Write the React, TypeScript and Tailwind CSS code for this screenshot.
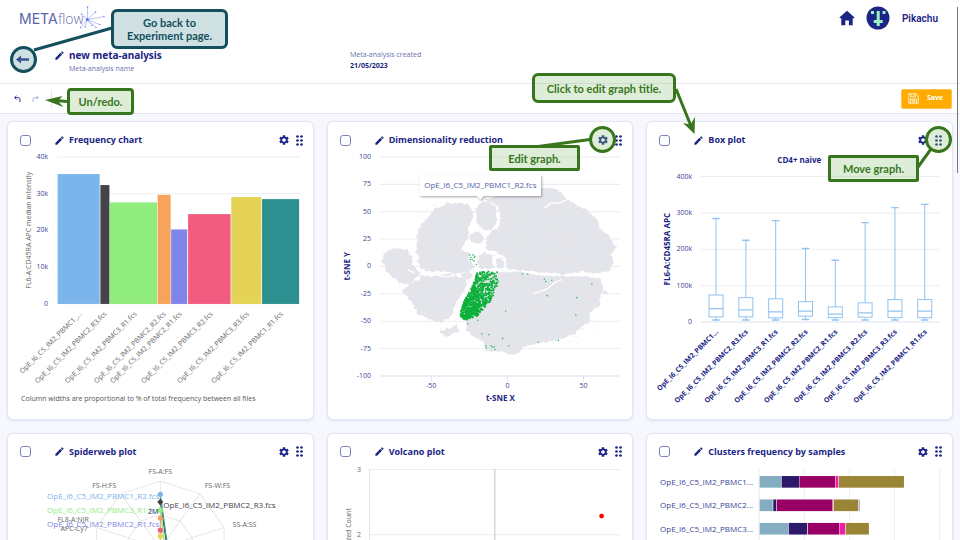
import type { ReactNode } from "react";
import { MdEdit, MdSettings } from "react-icons/md";

const NAVY = "#1b2585";
const GRID = "#ededf0";

const FILES = [
  "OpE_I6_C5_IM2_PBMC1_…",
  "OpE_I6_C5_IM2_PBMC2_R3.fcs",
  "OpE_I6_C5_IM2_PBMC3_R1.fcs",
  "OpE_I6_C5_IM2_PBMC2_R2.fcs",
  "OpE_I6_C5_IM2_PBMC2_R1.fcs",
  "OpE_I6_C5_IM2_PBMC3_R2.fcs",
  "OpE_I6_C5_IM2_PBMC3_R3.fcs",
  "OpE_I6_C5_IM2_PBMC1_R1.fcs",
];

type Point = [number, number];

// small seeded generator, keeps the scatter stable between renders
function createRandom(seed: number) {
  let s = seed;
  return () => {
    s = (s * 16807) % 2147483647;
    return s / 2147483647;
  };
}

function roughPath(points: Point[], seed: number, amount = 4) {
  const rand = createRandom(seed);
  const out: string[] = [];
  points.forEach((p, i) => {
    const q = points[(i + 1) % points.length];
    const steps = Math.max(1, Math.round(Math.hypot(q[0] - p[0], q[1] - p[1]) / 5));
    for (let k = 0; k < steps; k++) {
      const t = k / steps;
      const x = p[0] + (q[0] - p[0]) * t + (rand() - 0.5) * amount;
      const y = p[1] + (q[1] - p[1]) * t + (rand() - 0.5) * amount;
      out.push(`${x.toFixed(1)} ${y.toFixed(1)}`);
    }
  });
  return `M${out.join("L")}Z`;
}

function isInside([x, y]: Point, poly: Point[]) {
  let inside = false;
  for (let i = 0, j = poly.length - 1; i < poly.length; j = i++) {
    const [xi, yi] = poly[i];
    const [xj, yj] = poly[j];
    if (yi > y !== yj > y && x < ((xj - xi) * (y - yi)) / (yj - yi) + xi) inside = !inside;
  }
  return inside;
}

const CLUSTERS: Point[][] = [
  [[186, 425], [190, 404], [208, 388], [235, 384], [260, 390], [274, 408], [276, 428], [284, 444], [298, 456], [297, 468], [284, 476], [275, 488], [254, 493], [234, 486], [222, 474], [208, 466], [198, 448]],
  [[290, 350], [294, 324], [325, 288], [345, 264], [380, 250], [412, 247], [444, 252], [458, 278], [456, 300], [442, 322], [446, 350], [430, 368], [424, 392], [446, 396], [446, 420], [466, 436], [456, 450], [432, 458], [396, 460], [372, 452], [330, 455], [302, 446], [294, 428], [296, 408], [284, 396], [292, 376]],
  [[467, 266], [478, 246], [506, 245], [526, 262], [530, 285], [526, 314], [508, 330], [490, 328], [470, 312], [466, 290]],
  [[448, 352], [458, 336], [478, 334], [491, 348], [488, 366], [470, 372], [454, 366]],
  [[476, 408], [490, 394], [500, 402], [518, 404], [516, 428], [522, 444], [500, 446], [478, 444], [472, 426]],
  [[528, 420], [540, 412], [550, 420], [550, 446], [530, 446]],
  [[494, 238], [540, 226], [570, 212], [640, 205], [690, 203], [722, 216], [744, 240], [776, 258], [800, 270], [828, 292], [836, 322], [862, 344], [888, 382], [872, 402], [880, 428], [862, 454], [820, 460], [782, 454], [736, 463], [650, 454], [600, 450], [562, 446], [556, 414], [530, 396], [498, 386], [498, 352], [514, 334], [536, 318], [542, 286], [532, 256]],
  [[248, 510], [268, 492], [296, 480], [302, 464], [342, 468], [372, 460], [404, 464], [440, 482], [434, 506], [420, 530], [402, 554], [398, 584], [362, 605], [326, 598], [290, 578], [278, 546], [258, 526]],
  [[426, 458], [446, 454], [456, 464], [444, 480], [424, 474]],
  [[470, 454], [532, 455], [600, 455], [650, 464], [740, 468], [792, 468], [838, 474], [850, 502], [838, 536], [836, 554], [806, 578], [806, 604], [780, 620], [758, 644], [706, 660], [640, 670], [608, 682], [592, 698], [570, 704], [540, 692], [498, 692], [490, 664], [450, 642], [437, 626], [440, 602], [422, 590], [432, 540], [450, 506]],
  [[360, 634], [378, 624], [396, 622], [408, 610], [416, 634], [396, 640], [380, 650]],
  [[848, 516], [854, 508], [861, 517], [854, 523]],
];

const GREEN_REGION: Point[] = [[470, 453], [522, 453], [536, 456], [532, 490], [522, 512], [514, 538], [494, 560], [472, 586], [436, 600], [418, 588], [430, 546], [450, 508], [464, 480]];

const STRAY_CELLS: Point[] = [
  [448, 404], [458, 404], [452, 412], [462, 412], [456, 418], [464, 408], [450, 418], [461, 422], [468, 433], [606, 461], [622, 462], [672, 476], [676, 484], [694, 480], [814, 492], [680, 526], [769, 532], [766, 584], [556, 572], [443, 610], [484, 640], [506, 643], [547, 654], [653, 666], [714, 660], [498, 682], [496, 676], [512, 676], [516, 680], [522, 680], [524, 688], [565, 676], [472, 600], [532, 497], [534, 482],
];

function buildGreenCells() {
  const rand = createRandom(71);
  const cells: Point[] = [];
  while (cells.length < 800) {
    const p: Point = [416 + rand() * 122, 450 + rand() * 152];
    const edge = (p[0] - 440) / 100 - (p[1] - 520) / 300;
    if (isInside(p, GREEN_REGION) && rand() > edge * 0.8) cells.push(p);
  }
  return cells;
}

function buildSpecks() {
  const rand = createRandom(19);
  return Array.from({ length: 150 }, (): Point => [300 + rand() * 540, 250 + rand() * 420]);
}

const GREEN_CELLS = buildGreenCells();
const SPECKS = buildSpecks();

function Label({ x, y, children, size = 7, fill = "#3c4496", anchor = "middle", bold = false, rotate = 0 }: {
  x: number;
  y: number;
  children: ReactNode;
  size?: number;
  fill?: string;
  anchor?: "start" | "middle" | "end";
  bold?: boolean;
  rotate?: number;
}) {
  return (
    <text
      x={x}
      y={y}
      fontSize={size}
      fill={fill}
      textAnchor={anchor}
      fontWeight={bold ? 700 : 400}
      transform={rotate ? `rotate(${rotate} ${x} ${y})` : undefined}
    >
      {children}
    </text>
  );
}

function Plot({ title, children }: { title: string; children: ReactNode }) {
  return (
    <svg viewBox="0 0 304 268" className="block h-auto w-full" role="img" aria-label={title}>
      {children}
    </svg>
  );
}

function FrequencyChart() {
  const bars = [
    { x: 49.5, w: 42, top: 24, fill: "#7cb5ec" },
    { x: 92.2, w: 9, top: 35, fill: "#434348" },
    { x: 101.7, w: 47, top: 52.3, fill: "#90ed7d" },
    { x: 149.3, w: 13, top: 44.7, fill: "#f7a35c" },
    { x: 162.8, w: 16, top: 79.3, fill: "#8085e9" },
    { x: 179.7, w: 42.4, top: 64, fill: "#f15c80" },
    { x: 222.8, w: 30, top: 47, fill: "#e4d354" },
    { x: 253.5, w: 37, top: 49, fill: "#2b908f" },
  ];
  const ends = [74, 99, 129, 158, 174, 205, 241, 275];
  return (
    <Plot title="Frequency chart">
      {["40k", "30k", "20k", "10k", "0"].map((t, i) => (
        <g key={t}>
          <path d={`M49.5 ${7 + i * 36.6}H291.5`} stroke={GRID} />
          <Label x={40} y={9 + i * 36.6} anchor="end">{t}</Label>
        </g>
      ))}
      {bars.map((b) => (
        <rect key={b.x} x={b.x} y={b.top} width={b.w} height={153.6 - b.top} fill={b.fill} />
      ))}
      <Label x={23} y={80} rotate={-90} fill="#666">FL6-A:CD45RA APC median intensity</Label>
      {FILES.map((f, i) => (
        <Label key={f} x={ends[i]} y={164} rotate={-45} anchor="end" fill="#666">{f}</Label>
      ))}
      <Label x={13} y={250} anchor="start" fill="#555">
        Column widths are proportional to % of total frequency between all files
      </Label>
    </Plot>
  );
}

function DimensionalityChart() {
  return (
    <Plot title="Dimensionality reduction">
      {[100, 75, 50, 25, 0, -25, -50, -75, -100].map((t, i) => (
        <g key={t}>
          <path d={`M52 ${7 + i * 27.3}H291.5`} stroke={t === -100 ? "#dcdfee" : GRID} />
          <Label x={43} y={9 + i * 27.3} anchor="end">{t}</Label>
        </g>
      ))}
      {[-50, 0, 50].map((t, i) => (
        <g key={t}>
          <path d={`M${103 + i * 76} 225v6`} stroke="#dcdfee" />
          <Label x={103 + i * 76} y={237}>{t}</Label>
        </g>
      ))}
      <g transform="translate(-8 -30) scale(.3333)">
        {CLUSTERS.map((c, i) => (
          <path key={i} d={roughPath(c, 11 + i * 7, 7)} fill="#e4e5ea" />
        ))}
        <path d="M672 264 690 250 716 248 742 238M640 520 680 506 704 486 724 478M316 464 344 462 370 470 404 466M262 448 282 458" fill="none" stroke="#fff" strokeWidth="4" />
        {SPECKS.map(([x, y], i) => (
          <circle key={i} cx={x} cy={y} r="1.6" fill={i % 3 ? "#e9eaee" : "#d9dbe0"} />
        ))}
        {GREEN_CELLS.map(([x, y], i) => (
          <circle key={i} cx={x} cy={y} r="2.8" fill="#0cb13b" />
        ))}
        {STRAY_CELLS.map(([x, y], i) => (
          <circle key={i} cx={x} cy={y} r="2.3" fill="#2fb957" />
        ))}
      </g>
      <path d="M91.5 25h121v21h-57l-3.5 4-3.5-4H91.5z" fill="#fff" className="drop-shadow-[1px_1px_1px_rgba(0,0,0,0.35)]" />
      <Label x={152} y={37.5} size={8} fill="#555ca6">OpE_I6_C5_IM2_PBMC1_R2.fcs</Label>
      <Label x={22} y={116} size={8} rotate={-90} fill={NAVY} bold>t-SNE Y</Label>
      <Label x={172} y={250} size={8} fill={NAVY} bold>t-SNE X</Label>
    </Plot>
  );
}

function BoxPlot() {
  // high, q3, median, q1, low
  const boxes = [
    [68.3, 144.7, 158.3, 166.5, 169.7],
    [90, 147.3, 159.5, 166.5, 169.7],
    [70.5, 148.5, 161.5, 167.5, 169.7],
    [98.3, 151.3, 160.8, 165.8, 169.2],
    [110, 156.5, 163.8, 167.3, 169.7],
    [72.5, 152.5, 162.5, 166.8, 169.7],
    [57.5, 149.2, 160.8, 167.3, 169.7],
    [54.3, 149.2, 160.8, 167.3, 169.7],
  ];
  return (
    <Plot title="Box plot">
      <Label x={152} y={13} size={8} fill={NAVY} bold>CD4+ naive</Label>
      {["400k", "300k", "200k", "100k", "0"].map((t, i) => (
        <g key={t}>
          <path d={`M54 ${26.5 + i * 36.3}H291.5`} stroke={t === "0" ? "#e0e3f0" : GRID} />
          <Label x={45} y={28.5 + i * 36.3} anchor="end">{t}</Label>
        </g>
      ))}
      {boxes.map(([high, q3, med, q1, low], i) => {
        const c = 68.9 + i * 29.75;
        return (
          <g key={i} stroke="#92c3ef" fill="none">
            <path d={`M${c} ${high}V${q3}M${c} ${q1}V${low}`} />
            <path d={`M${c - 3.7} ${high}h7.4M${c - 3.7} ${low}h7.4M${c - 7} ${med}h14`} strokeWidth="1.4" />
            <rect x={c - 7} y={q3} width="14" height={q1 - q3} />
          </g>
        );
      })}
      <Label x={23} y={99} size={8} rotate={-90} fill={NAVY} bold>FL6-A:CD45RA APC</Label>
      {FILES.map((f, i) => (
        <Label key={f} x={71.5 + i * 29.75} y={182} rotate={-45} anchor="end" fill={NAVY} bold>
          {f.replace("_…", "...")}
        </Label>
      ))}
    </Plot>
  );
}

function SpiderwebPlot() {
  const ring = (r: number) =>
    Array.from({ length: 10 }, (_, i) => {
      const a = (i * Math.PI) / 5;
      return `${(152 + r * Math.sin(a)).toFixed(1)},${(86 - r * Math.cos(a)).toFixed(1)}`;
    });
  const dots: [number, string][] = [[32.3, "#7cb5ec"], [48, "#90ed7d"], [56, "#f7a35c"], [68, "#f15c80"], [74, "#e4d354"]];
  return (
    <Plot title="Spiderweb plot">
      <polygon points={ring(67).join(" ")} fill="none" stroke="#e8e8e8" />
      <polygon points={ring(33.5).join(" ")} fill="none" stroke="#e8e8e8" />
      {ring(67).map((p) => (
        <path key={p} d={`M152,86L${p}`} stroke="#e8e8e8" />
      ))}
      <Label x={152} y={12} fill="#666">FS-A:FS</Label>
      <Label x={96} y={26} fill="#666">FS-H:FS</Label>
      <Label x={209} y={26} fill="#666">FS-W:FS</Label>
      <Label x={236} y={65} fill="#666">SS-A:SS</Label>
      <Label x={65} y={60} fill="#666">FL8-A:NIR</Label>
      <Label x={66} y={69} fill="#666">APC-Cy7</Label>
      <path d="M152 40 158 80" stroke="#434348" />
      <path d="M152 32 159 82" stroke="#2b908f" />
      <path d="M152 48 156 80" stroke="#90ed7d" strokeWidth="1.5" />
      <path d="M152 56V80" stroke="#f7a35c" />
      {dots.map(([y, fill]) => (
        <circle key={y} cx="152" cy={y} r="2.6" fill={fill} />
      ))}
      <path d="M152 36.5 155 40 152 43.5 149 40Z" fill="#434348" />
      <Label x={151} y={37} size={8} anchor="end" fill="#7cb5ec">OpE_I6_C5_IM2_PBMC1_R2.fcs</Label>
      <Label x={155} y={46} size={8} anchor="start" fill="#434348">OpE_I6_C5_IM2_PBMC2_R3.fcs</Label>
      <Label x={151} y={51} size={8} anchor="end" fill="#90ed7d">OpE_I6_C5_IM2_PBMC3_R1.fcs</Label>
      <Label x={151} y={65} size={8} anchor="end" fill="#8085e9">OpE_I6_C5_IM2_PBMC2_R1.fcs</Label>
      <Label x={150} y={52} anchor="end" fill={NAVY}>2M</Label>
    </Plot>
  );
}

function VolcanoPlot() {
  return (
    <Plot title="Volcano plot">
      {[3, 2, 1].map((t, i) => (
        <g key={t}>
          <path d={`M41.5 ${7.5 + i * 65}H291.5`} stroke="#ebecf4" />
          <Label x={33} y={9.5 + i * 65} anchor="end" fill="#666">{t}</Label>
        </g>
      ))}
      <path d="M41.5 7V210" stroke="#dfe1f0" />
      <path d="M166.5 7V210" stroke="#c4c4c8" />
      <circle cx="273" cy="54" r="2.4" fill="#f00" />
      <Label x={23} y={46} rotate={-90} anchor="end" fill="#666">Normalized Count</Label>
    </Plot>
  );
}

function ClustersChart() {
  const colors = ["#85adc1", "#2d196a", "#990066", "#f020a2", "#9a8536", "#8a86c8"];
  // start and end of each segment
  const rows: { name: string; parts: Point[] }[] = [
    { name: "OpE_I6_C5_IM2_PBMC1...", parts: [[112, 133.6], [134, 151.3], [151.7, 187.3], [187.7, 190.5], [191, 256]] },
    { name: "OpE_I6_C5_IM2_PBMC2...", parts: [[112, 125], [125.6, 128.4], [129, 184.6], [185, 185.4], [186, 210.4], [211, 211.8]] },
    { name: "OpE_I6_C5_IM2_PBMC3...", parts: [[112, 140.4], [141, 159.3], [160, 191.3], [191.7, 197.4], [198, 221]] },
  ];
  return (
    <Plot title="Clusters frequency by samples">
      {[0, 1, 2, 3, 4].map((i) => (
        <path key={i} d={`M${112 + i * 45} 8V210`} stroke={GRID} />
      ))}
      {rows.map((row, r) => (
        <g key={row.name}>
          <Label x={13} y={22.7 + r * 23.5} size={8} anchor="start">{row.name}</Label>
          {row.parts.map(([from, to], i) => (
            <rect key={from} x={from + 0.4} y={14 + r * 23.4} width={to - from} height="11.6" fill={colors[i]} />
          ))}
        </g>
      ))}
    </Plot>
  );
}

function DragDots() {
  return (
    <svg width="7" height="11" viewBox="0 0 7 11" fill={NAVY}>
      {[1.5, 5.5].map((x) => [1.5, 5.5, 9.5].map((y) => <circle key={`${x}-${y}`} cx={x} cy={y} r="1.35" />))}
    </svg>
  );
}

function ChartCard({ title, children }: { title: string; children: ReactNode }) {
  return (
    <article className="rounded-md border border-[#e2e5f3] bg-white shadow-sm shadow-[#dfe3f5]">
      <div className="flex h-7 items-center pt-2 pr-2.5 pl-3">
        <input
          type="checkbox"
          aria-label={`Select ${title}`}
          className="size-[11px] appearance-none rounded-[3px] border border-[#7c81c0] bg-white"
        />
        <button type="button" aria-label={`Edit title of ${title}`} className="ml-[23px]">
          <MdEdit className="size-[11px]" />
        </button>
        <h2 className="ml-1 text-[9px] leading-5 font-bold">{title}</h2>
        <button type="button" aria-label={`${title} settings`} className="ml-auto">
          <MdSettings className="size-3" />
        </button>
        <button type="button" aria-label={`Move ${title}`} className="ml-1.5">
          <DragDots />
        </button>
      </div>
      {children}
    </article>
  );
}

function Logo() {
  return (
    <a href="#" aria-label="METAflow" className="block">
      <svg width="90" height="24" viewBox="0 0 90 24" className="block">
        <text x="1" y="18" fontSize="14" fill="#5a62a8" className="[font-family:Inter,sans-serif]">META</text>
        <text x="40" y="18" fontSize="14" fontWeight="300" fill="#6970b2" className="[font-family:'Open_Sans',sans-serif]">flow</text>
        <g stroke="#8fa0f5" strokeWidth=".6" fill="#5b74f2">
          {[[69.6, 1], [77.6, 6], [86, 10.6], [82, 18.6], [78, 21.6], [74, 19.6], [62.6, 21.6], [63.6, 8], [67, 21]].map(([x, y]) => (
            <g key={`${x}-${y}`}>
              <path d={`M69.3 13.5 ${x} ${y}`} />
              <circle cx={x} cy={y} r=".7" stroke="none" />
            </g>
          ))}
          <circle cx="69.3" cy="13.5" r="1.5" stroke="none" />
        </g>
      </svg>
    </a>
  );
}

function Avatar() {
  return (
    <svg width="24" height="24" viewBox="0 0 24 24">
      <circle cx="12" cy="12" r="11.5" fill={NAVY} />
      <path d="M5 5h3v3H5zM16.5 5h3v3h-3zM10.7 5h3v9h3v3h-3v3h-3v-3h-3v-3h3z" fill="#9df0c4" />
    </svg>
  );
}

function Callout({ className, children }: { className: string; children?: ReactNode }) {
  return (
    <div className={`absolute flex items-center justify-center border-3 text-center text-[11px] leading-[13px] font-bold [font-family:Lato,sans-serif] ${className}`}>
      {children}
    </div>
  );
}

const GREEN_NOTE = "border-[#38761d] bg-[#93c47d]/30 text-[#38761d]";
const TEAL_NOTE = "border-[#134f5c] bg-[#76a5af]/35 text-[#134f5c]";

function Annotations() {
  return (
    <div className="pointer-events-none absolute inset-0">
      <svg width="960" height="540" className="absolute top-0 left-0" fill="none" strokeWidth="3">
        <path d="M34 50 112 28" stroke="#134f5c" />
        <g stroke="#38761d">
          <path d="M67 101.5 56 100.5M676 89 691 126M538 146.5 590 139.5M918 167 931 149" />
          <g fill="#38761d" stroke="none">
            <path d="M45 100 62.5 96 58 101 63.5 107Z" />
            <path d="M694.5 134 683 123 690.5 124.5 695 117Z" />
          </g>
        </g>
      </svg>
      <Callout className={`top-[9px] left-[111px] h-10 w-[117px] rounded-md ${TEAL_NOTE}`}>
        Go back to
        <br />
        Experiment page.
      </Callout>
      <Callout className={`top-[46px] left-[10px] size-[27px] rounded-full ${TEAL_NOTE}`} />
      <Callout className={`top-[88px] left-[67px] h-[27px] w-[67px] rounded-sm ${GREEN_NOTE}`}>Un/redo.</Callout>
      <Callout className={`top-[73px] left-[532px] h-[30px] w-36 rounded-md ${GREEN_NOTE}`}>Click to edit graph title.</Callout>
      <Callout className={`top-[145px] left-[489px] h-[26px] w-[91px] rounded-xs ${GREEN_NOTE}`}>Edit graph.</Callout>
      <Callout className={`top-[126px] left-[589px] size-[27px] rounded-full ${GREEN_NOTE}`} />
      <Callout className={`top-[155px] left-[828px] h-[27px] w-[91px] rounded-xs ${GREEN_NOTE}`}>Move graph.</Callout>
      <Callout className={`top-[126px] left-[925px] size-[27px] rounded-full ${GREEN_NOTE}`} />
    </div>
  );
}

export default function App() {
  return (
    <div className="relative h-screen overflow-hidden bg-[#f7f8fe] text-[#1b2585] [font-family:'Open_Sans',sans-serif]">
      <header className="border-b border-[#e6e7f2] bg-white">
        <div className="flex h-9 items-center justify-between pr-[22px] pl-[18px]">
          <Logo />
          <div className="flex items-center">
            <a href="#" aria-label="Home">
              <svg width="16" height="16" viewBox="0 0 16 16" fill={NAVY}>
                <path d="M8 .7 15.6 7.400 15 8.300H13.700V15.300H9.900V10.500H6.300V15.300H2.300V8.300H1L.4 7.400Z" />
              </svg>
            </a>
            <div className="ml-[11px]">
              <Avatar />
            </div>
            <span className="ml-3 text-[10px] font-semibold [font-family:Roboto,sans-serif]">Pikachu</span>
          </div>
        </div>
        <div className="flex h-[47px] items-start pl-4">
          <button type="button" aria-label="Back to experiment" className="flex h-full w-[38px] items-center">
            <svg width="14" height="9" viewBox="0 0 14 9" fill={NAVY}>
              <path d="M0 4.5 5 .5V3.2H13V5.8H5V8.5Z" />
            </svg>
          </button>
          <button type="button" aria-label="Edit name" className="mt-3.5">
            <MdEdit className="size-[11px]" />
          </button>
          <div className="ml-1 w-[281px] pt-3">
            <h1 className="text-[10px] leading-[15px] font-bold [font-family:'Noto_Sans',sans-serif]">new meta-analysis</h1>
            <p className="text-[7px] leading-[11px] text-[#6a70b0]">Meta-analysis name</p>
          </div>
          <div className="pt-[13px]">
            <p className="text-[7px] leading-[11px] text-[#6a70b0]">Meta-analysis created</p>
            <p className="text-[7px] leading-[11px] font-bold">21/05/2023</p>
          </div>
        </div>
      </header>

      <div className="flex h-[30px] items-center border-b border-[#e6e7f2] bg-white pr-2 pl-3.5">
        <button type="button" aria-label="Undo">
          <svg width="7" height="8" viewBox="0 0 7 8" fill="none" stroke={NAVY} strokeWidth=".9">
            <path d="M2.5.8.7 2.6 2.5 4.4M.7 2.6H4Q6 2.6 6 4.6V7.2" />
          </svg>
        </button>
        <button type="button" aria-label="Redo" className="ml-[11px]">
          <svg width="7" height="8" viewBox="0 0 7 8" fill="none" stroke="#a4a8d2" strokeWidth=".9">
            <path d="M4.5.8 6.3 2.6 4.5 4.4M6.3 2.6H3Q1 2.6 1 4.6V7.2" />
          </svg>
        </button>
        <span className="ml-3 h-[18px] w-px bg-[#e6e7f2]" />
        <button
          type="button"
          className="ml-auto flex h-5 w-[51px] items-center gap-2 rounded-xs border border-[#ffc34d] bg-[#ffab00] pl-1.5 text-[7px] font-bold text-white [font-family:'Noto_Sans',sans-serif]"
        >
          <svg width="11" height="11" viewBox="0 0 11 11" fill="none" stroke="#fff" strokeWidth=".8">
            <path d="M.8.8H8.5L10.2 2.5V10.2H.8ZM2.8.8V3.8H7.6V.8M6.2 1.5V3M2.5 10.2V6H8.5V10.2M3.8 7.4H7.2M3.8 8.8H7.2" />
          </svg>
          Save
        </button>
      </div>

      <main className="grid grid-cols-3 gap-[13px] px-[7px] pt-[7px]">
        <ChartCard title="Frequency chart"><FrequencyChart /></ChartCard>
        <ChartCard title="Dimensionality reduction"><DimensionalityChart /></ChartCard>
        <ChartCard title="Box plot"><BoxPlot /></ChartCard>
        <ChartCard title="Spiderweb plot"><SpiderwebPlot /></ChartCard>
        <ChartCard title="Volcano plot"><VolcanoPlot /></ChartCard>
        <ChartCard title="Clusters frequency by samples"><ClustersChart /></ChartCard>
      </main>

      <div className="absolute top-[7px] right-0.5 h-[166px] w-px bg-[#77777c]" />
      <Annotations />
    </div>
  );
}
